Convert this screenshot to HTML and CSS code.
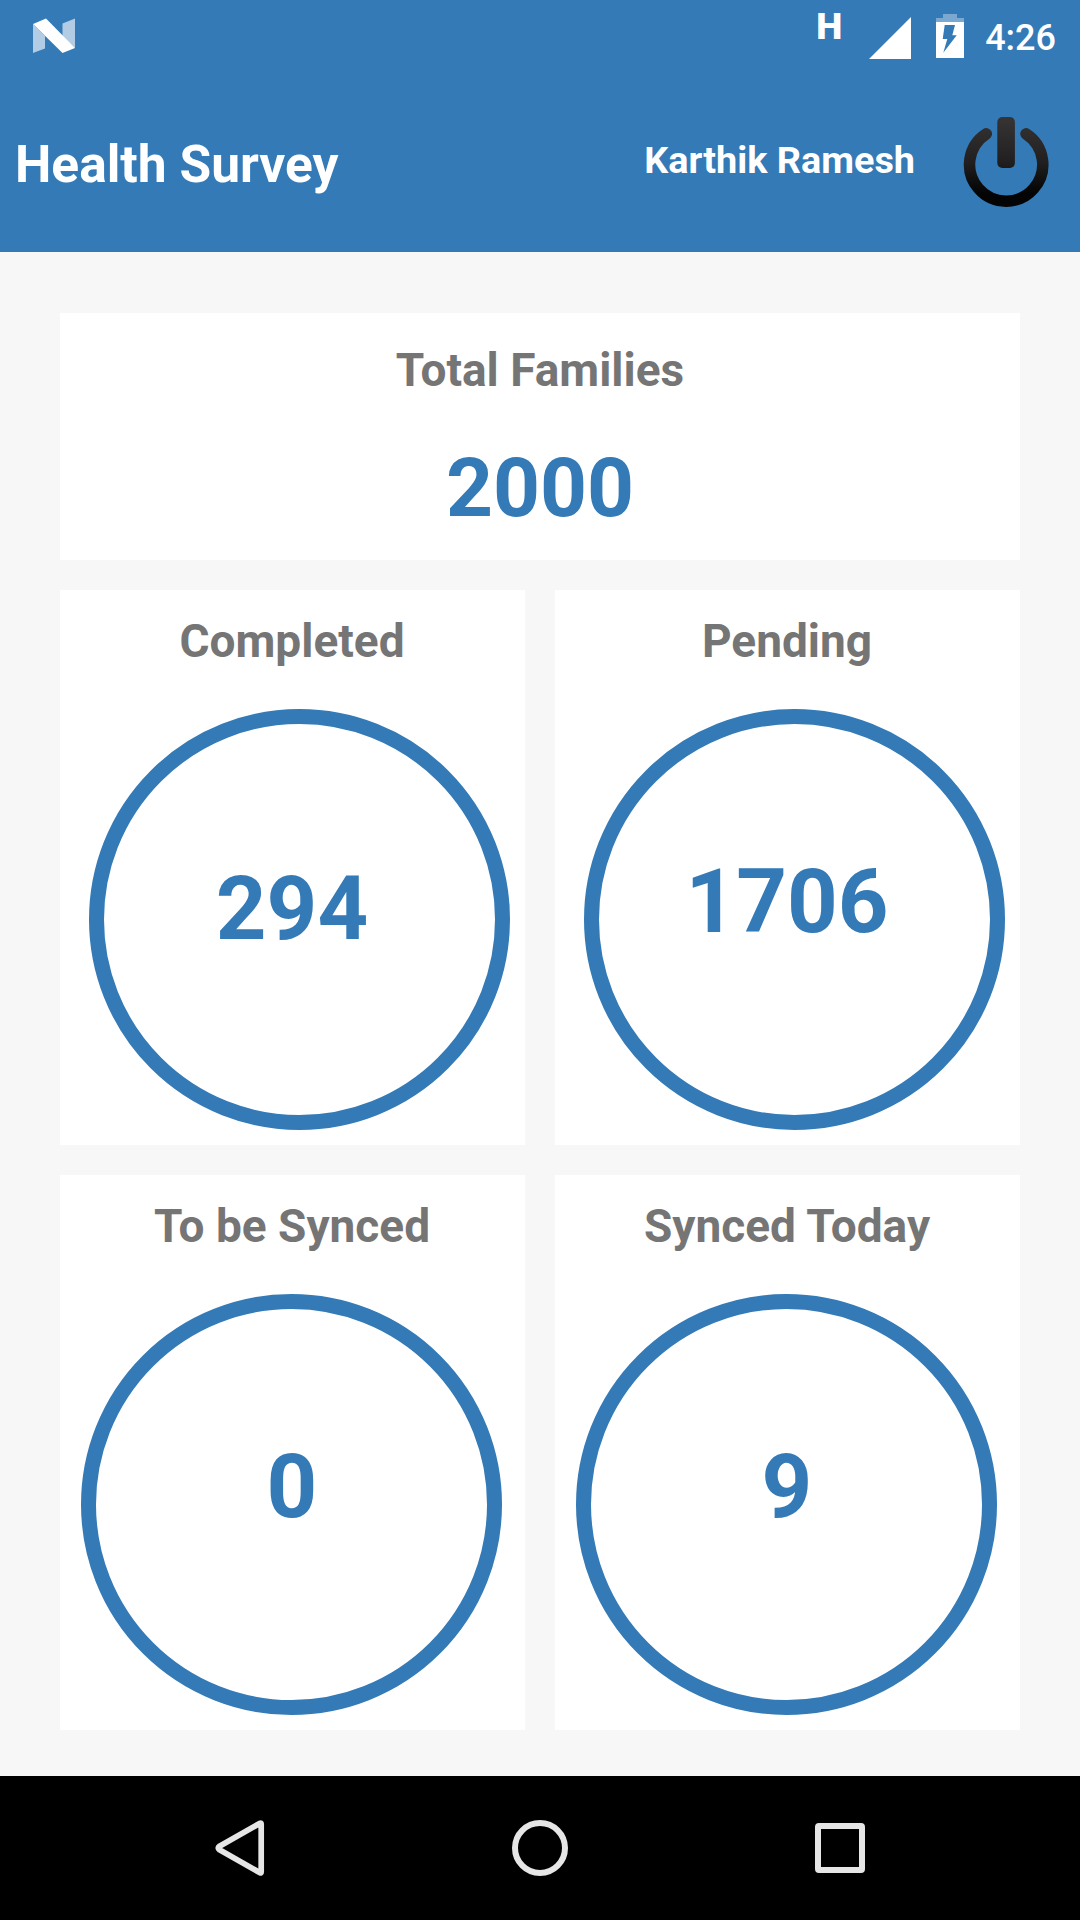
FILE: index.html
```html
<!DOCTYPE html>
<html lang="en">
<head>
<meta charset="utf-8">
<title>Health Survey</title>
<link rel="stylesheet" href="styles.css">
</head>
<body>
<div class="screen">
  <div class="status-bar">
    <svg class="nougat" width="44" height="36" viewBox="32 18 44 36">
      <path d="M33 24L45 36V48.500L33 53ZM62.500 23.500L75 18.500V48L62.500 37Z" fill="#fff" fill-opacity=".62"/>
      <path d="M33 24L46 18.500L75 48L62.500 53Z" fill="#fff"/>
    </svg>
    <span class="network">H</span>
    <svg class="signal" width="42" height="42" viewBox="0 0 42 42"><path d="M0 42L42 0V42Z" fill="#fff"/></svg>
    <svg class="battery" width="28" height="44" viewBox="0 0 28 44">
      <path d="M7 0H21V4H28V8H0V4H7Z" fill="#fff" fill-opacity=".35"/>
      <path fill-rule="evenodd" d="M0 8H28V44H0ZM8.700 11L6.700 25H11.300L7.300 38.700L20.700 21.300H16.300L19 11Z" fill="#fff"/>
    </svg>
    <span class="clock">4:26</span>
  </div>
  <header class="app-bar">
    <h1 class="app-title">Health Survey</h1>
    <span class="user">Karthik Ramesh</span>
    <svg class="power" width="86" height="90" viewBox="963 117 86 90">
      <defs>
        <linearGradient id="ink" gradientUnits="userSpaceOnUse" x1="0" y1="117" x2="0" y2="207">
          <stop offset="0" stop-color="#363434"/><stop offset=".5" stop-color="#211f1f"/><stop offset=".85" stop-color="#040404"/>
        </linearGradient>
      </defs>
      <rect x="997.300" y="117" width="17.600" height="51" rx="5" fill="url(#ink)"/>
      <path d="M986.300 133.800A36.600 36.600 0 1 0 1026 133.800" fill="none" stroke="url(#ink)" stroke-width="11.500" stroke-linecap="round"/>
    </svg>
  </header>
  <main class="dashboard">
    <section class="card total">
      <h2 class="label">Total Families</h2>
      <div class="total-value">2000</div>
    </section>
    <section class="card">
      <h2 class="label">Completed</h2>
      <div class="dial"><div class="ring shifted"></div><div class="count lowered">294</div></div>
    </section>
    <section class="card">
      <h2 class="label">Pending</h2>
      <div class="dial"><div class="ring shifted"></div><div class="count">1706</div></div>
    </section>
    <section class="card">
      <h2 class="label">To be Synced</h2>
      <div class="dial"><div class="ring"></div><div class="count">0</div></div>
    </section>
    <section class="card">
      <h2 class="label">Synced Today</h2>
      <div class="dial"><div class="ring"></div><div class="count">9</div></div>
    </section>
  </main>
  <nav class="nav-bar">
    <svg width="60" height="60" viewBox="210 1818 60 60"><path d="M219.500 1846.200L260 1823.200Q261.200 1822.600 261.200 1824V1872Q261.200 1873.400 260 1872.800L219.500 1849.800Q216.900 1848 219.500 1846.200Z" fill="none" stroke="#e6e6e6" stroke-width="5.700" stroke-linejoin="round"/></svg>
    <svg width="60" height="60" viewBox="0 0 60 60"><circle cx="30" cy="30" r="25" fill="none" stroke="#e6e6e6" stroke-width="6"/></svg>
    <svg width="60" height="60" viewBox="0 0 60 60"><rect x="8" y="8" width="44" height="44" rx="1" fill="none" stroke="#e6e6e6" stroke-width="6"/></svg>
  </nav>
</div>
</body>
</html>
```
FILE: styles.css
```css
* { box-sizing: border-box; }

body {
  margin: 0;
  font-family: Roboto, "Liberation Sans", sans-serif;
  font-weight: 700;
}

.screen {
  width: 1080px;
  height: 1920px;
  display: flex;
  flex-direction: column;
  background: #f7f7f7;
}

.status-bar {
  height: 72px;
  display: flex;
  align-items: flex-start;
  padding: 0 24px 0 32px;
  background: #337ab7;
  color: #fff;
}

.nougat { margin-top: 18px; }

.network {
  margin: 7px 27px 0 auto;
  font-size: 37px;
  font-weight: 900;
  line-height: 40px;
}

.signal { margin-top: 17px; }

.battery { margin: 14px 21px 0 25px; }

.clock {
  margin-top: 16px;
  font-size: 36px;
  font-weight: 500;
  line-height: 44px;
}

.app-bar {
  height: 180px;
  display: flex;
  align-items: flex-start;
  padding: 0 31px 0 15px;
  background: #337ab7;
  color: #fff;
}

.app-title {
  margin: 63px auto 0 0;
  font-size: 51.5px;
  line-height: 60px;
}

.user {
  margin: 63px 48px 0 0;
  font-size: 37.8px;
  line-height: 50px;
}

.power { margin-top: 45px; }

.dashboard {
  flex: 1;
  display: grid;
  grid-template-columns: 465px 465px;
  grid-template-rows: 247px 555px 555px;
  gap: 30px;
  padding: 61px 60px 0;
}

.card {
  background: #fff;
  padding: 21px 1px 0 0;
  text-align: center;
}

.total {
  grid-column: span 2;
  padding: 27px 0 0;
}

.label {
  margin: 0;
  font-size: 46px;
  line-height: 60px;
  color: #757575;
}

.total-value {
  margin-top: 38px;
  font-size: 82px;
  line-height: 100px;
  color: #337ab7;
}

/* The ring and its count share one grid cell. */
.dial {
  display: grid;
  grid-template-columns: 100%;
  margin-top: 38px;
}

.ring,
.count { grid-area: 1 / 1; }

.ring {
  width: 421px;
  height: 421px;
  margin-left: 21px;
  border: 15px solid #337ab7;
  border-radius: 50%;
}

.ring.shifted { margin-left: 29px; }

.count {
  padding-top: 143px;
  font-size: 88.5px;
  line-height: 100px;
  color: #337ab7;
}

.count.lowered { padding-top: 150px; }

.nav-bar {
  height: 144px;
  display: flex;
  align-items: center;
  justify-content: space-between;
  padding: 0 210px;
  background: #000;
}
```
